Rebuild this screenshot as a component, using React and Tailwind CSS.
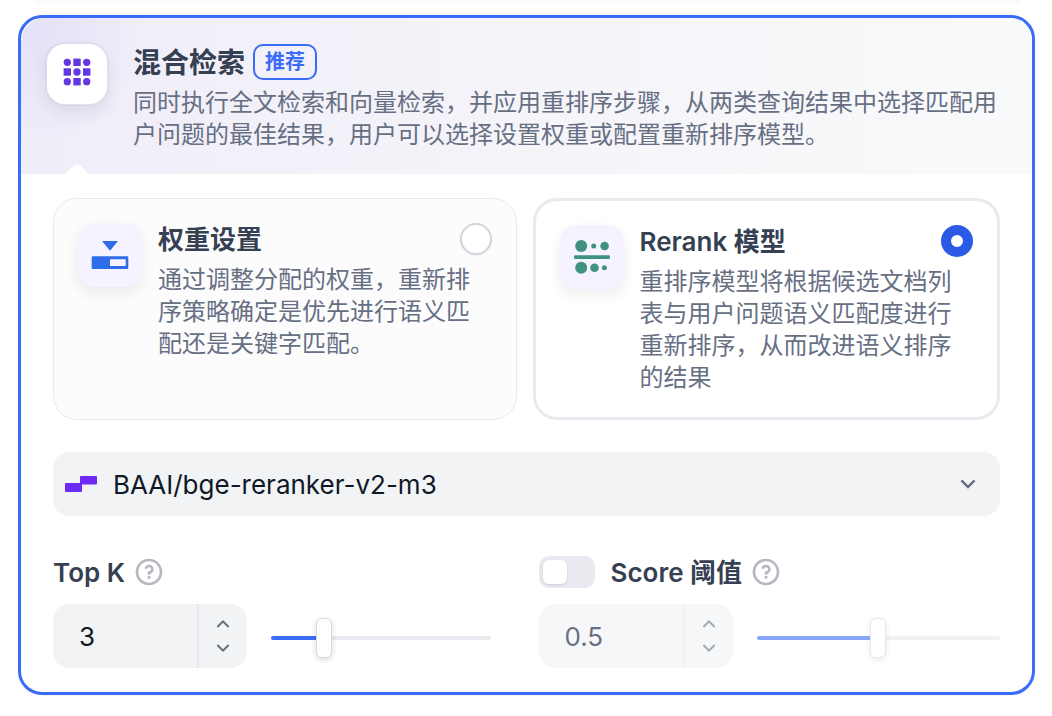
import { useState } from "react";
import { RiArrowDownSLine, RiArrowUpSLine, RiQuestionLine } from "react-icons/ri";

function HybridIcon() {
  const cells = [0, 1, 2].flatMap((row) => [0, 1, 2].map((col) => ({ row, col })));
  return (
    <svg viewBox="0 0 28 28" className="size-7" fill="#6338E0" aria-hidden="true">
      {cells.map(({ row, col }) =>
        (row + col) % 2 === 0 ? (
          <circle key={`${row}-${col}`} cx={4.3 + col * 9.7} cy={4.3 + row * 9.7} r="3.65" />
        ) : (
          <rect key={`${row}-${col}`} x={0.6 + col * 9.7} y={0.6 + row * 9.7} width="7.4" height="7.4" />
        )
      )}
    </svg>
  );
}

function WeightIcon() {
  return (
    <svg viewBox="0 0 40 40" className="size-10" aria-hidden="true">
      <path d="M12 6h16l-8 9.8z" fill="#2F6CE8" />
      <path
        d="M2.7 21.3h34.6a1 1 0 0 1 1 1V33a1 1 0 0 1-1 1H2.7a1 1 0 0 1-1-1V22.3a1 1 0 0 1 1-1zM20 24.3V31h15.7v-6.7z"
        fill="#2F6CE8"
        fillRule="evenodd"
      />
    </svg>
  );
}

function RerankIcon() {
  return (
    <svg viewBox="0 0 40 40" className="size-10" fill="#3F9280" aria-hidden="true">
      <circle cx="9.2" cy="9" r="6" />
      <circle cx="21.7" cy="9" r="2.5" />
      <circle cx="32.6" cy="9" r="4.3" />
      <rect x="2" y="18.2" width="36" height="3.8" rx="1.2" />
      <circle cx="9.2" cy="30.8" r="6" />
      <circle cx="22.5" cy="30.8" r="4.3" />
      <circle cx="32.4" cy="30.8" r="2.5" />
    </svg>
  );
}

function ProviderLogo() {
  return (
    <svg viewBox="0 0 32 32" className="size-8 shrink-0" fill="#6E29F6" aria-hidden="true">
      <path d="M16 8h15a1 1 0 0 1 1 1v6.5a1 1 0 0 1-1 1H17v6.5a1 1 0 0 1-1 1H1a1 1 0 0 1-1-1V16a1 1 0 0 1 1-1h14V9a1 1 0 0 1 1-1z" />
    </svg>
  );
}

function OptionCard({ id, title, text, icon, checked, onSelect }) {
  return (
    <label
      htmlFor={id}
      className={
        checked
          ? "flex flex-1 cursor-pointer gap-4 rounded-3xl border-3 border-[#e9e9ef] bg-white p-6"
          : "flex flex-1 cursor-pointer gap-4 rounded-3xl border border-[#e9e9ef] bg-[#fcfcfd] p-6"
      }
    >
      <span className="flex size-16 shrink-0 items-center justify-center rounded-2xl bg-[#f5f3ff] shadow-[0_6px_14px_rgba(16,24,40,0.08)]">
        {icon}
      </span>
      <span className="block min-w-0 flex-1">
        <span className="flex h-8 items-center justify-between">
          <span className="pt-0.5 text-[26px] leading-8 font-semibold text-[#354052]">{title}</span>
          <input
            id={id}
            type="radio"
            name="rerank-mode"
            checked={checked}
            onChange={onSelect}
            className="size-8 shrink-0 appearance-none rounded-full border-2 border-[#d0d5dc] bg-white shadow-xs checked:border-10 checked:border-[#2b5be6]"
          />
        </span>
        <span className="mt-[9px] -mb-px block text-2xl leading-8 text-[#676f83]">{text}</span>
      </span>
    </label>
  );
}

function NumberSlider({ id, label, value, min, max, step, disabled, onChange }) {
  const clamp = (v) => Math.min(max, Math.max(min, Math.round(v * 100) / 100));
  const percent = ((value - min) / (max - min)) * 100;
  return (
    <div className={disabled ? "mt-4 flex items-center gap-6 opacity-60" : "mt-4 flex items-center gap-6"}>
      <div className="flex h-16 w-[194px] shrink-0 overflow-hidden rounded-2xl bg-[#f1f3f5]">
        <input
          id={id}
          type="text"
          inputMode="decimal"
          value={value}
          disabled={disabled}
          onChange={(e) => onChange(clamp(Number(e.target.value) || min))}
          className="min-w-0 flex-1 bg-transparent pl-[26px] text-[26px] text-[#101828] outline-none disabled:text-[#020f30]"
        />
        <div className="flex w-[50px] flex-col items-center justify-center border-l-2 border-[#e6e8ec] text-[#676f83]">
          <button type="button" aria-label={`${label} +`} disabled={disabled} onClick={() => onChange(clamp(value + step))}>
            <RiArrowUpSLine className="size-6" />
          </button>
          <button type="button" aria-label={`${label} -`} disabled={disabled} onClick={() => onChange(clamp(value - step))}>
            <RiArrowDownSLine className="size-6" />
          </button>
        </div>
      </div>
      <input
        type="range"
        aria-label={label}
        min={min}
        max={max}
        step={step}
        value={value}
        disabled={disabled}
        onChange={(e) => onChange(Number(e.target.value))}
        style={{ "--fill": `${percent}%` }}
        className="mt-1 h-10 min-w-0 flex-1 appearance-none bg-transparent [&::-webkit-slider-runnable-track]:h-1 [&::-webkit-slider-runnable-track]:rounded-full [&::-webkit-slider-runnable-track]:bg-[linear-gradient(to_right,#3b6cf8_var(--fill),#e9e9ef_var(--fill))] [&::-webkit-slider-thumb]:-mt-[18px] [&::-webkit-slider-thumb]:h-10 [&::-webkit-slider-thumb]:w-4 [&::-webkit-slider-thumb]:appearance-none [&::-webkit-slider-thumb]:rounded-md [&::-webkit-slider-thumb]:border [&::-webkit-slider-thumb]:border-[#d9d9dc] [&::-webkit-slider-thumb]:bg-white [&::-webkit-slider-thumb]:shadow-[0_2px_6px_rgba(9,9,11,0.14)]"
      />
    </div>
  );
}

export default function App() {
  const [mode, setMode] = useState("rerank");
  const [topK, setTopK] = useState(3);
  const [score, setScore] = useState(0.5);
  const [scoreOn, setScoreOn] = useState(false);

  return (
    <main className="bg-white pr-[17px] pb-5 pl-[18px] font-['Inter','Noto_Sans_CJK_SC',sans-serif]">
      <div className="mx-4 h-0.5 rounded-b-full bg-[#fafafa] shadow-[0_1px_2px_rgba(16,24,40,0.03)]" />
      <section className="mt-[13px] rounded-3xl border-3 border-[#3b6cf8] bg-white shadow-xs">
        <header className="relative flex gap-6 rounded-t-3xl bg-[radial-gradient(circle_at_16px_16px,#e6e1f8,transparent_110px),linear-gradient(to_right,#f0edf9,#f5f4f9_50%,#f9fafb)] p-6">
          <div className="flex size-16 shrink-0 justify-center rounded-[20px] border-2 border-black/4 bg-white bg-clip-padding pt-3.5 shadow-[0_8px_16px_rgba(16,24,40,0.07)]">
            <HybridIcon />
          </div>
          <div className="min-w-0">
            <div className="flex h-10 items-center gap-2">
              <h2 className="pt-0.5 text-[28px] leading-10 font-semibold text-[#354052]">混合检索</h2>
              <span className="flex h-9 items-center rounded-[10px] border-2 border-[#3b6cf8] px-2.5 text-xl font-semibold text-[#3b6cf8]">
                推荐
              </span>
            </div>
            <p className="mt-[5px] -mb-px text-2xl leading-8 text-[#676f83]">
              同时执行全文检索和向量检索，并应用重排序步骤，从两类查询结果中选择匹配用户问题的最佳结果，用户可以选择设置权重或配置重新排序模型。
            </p>
          </div>
          <svg viewBox="0 0 26 10" className="absolute bottom-0 left-[43px] h-2.5 w-[26px]" fill="#fff" aria-hidden="true">
            <path d="M0 10C3 9.5 6 5.5 9.5 1.8 11.5-.3 14.5-.3 16.5 1.8 20 5.5 23 9.5 26 10z" />
          </svg>
        </header>

        <div className="px-8 py-6">
          <div className="flex gap-4">
            <OptionCard
              id="mode-weight"
              title="权重设置"
              text="通过调整分配的权重，重新排序策略确定是优先进行语义匹配还是关键字匹配。"
              icon={<WeightIcon />}
              checked={mode === "weight"}
              onSelect={() => setMode("weight")}
            />
            <OptionCard
              id="mode-rerank"
              title="Rerank 模型"
              text="重排序模型将根据候选文档列表与用户问题语义匹配度进行重新排序，从而改进语义排序的结果"
              icon={<RerankIcon />}
              checked={mode === "rerank"}
              onSelect={() => setMode("rerank")}
            />
          </div>

          <div className="mt-8 flex h-16 items-center rounded-2xl bg-[#f1f3f5] pr-[18px] pl-3">
            <ProviderLogo />
            <select
              aria-label="Rerank 模型"
              className="ml-4 h-full min-w-0 flex-1 appearance-none bg-transparent text-[26px] text-[#101828] outline-none"
            >
              <option>BAAI/bge-reranker-v2-m3</option>
            </select>
            <RiArrowDownSLine className="pointer-events-none size-7 shrink-0 text-[#676f83]" />
          </div>

          <div className="mt-10 grid grid-cols-2 gap-6">
            <div className="pr-6">
              <div className="flex h-8 items-center gap-2">
                <label htmlFor="top-k" className="pt-0.5 text-[26px] leading-8 font-semibold text-[#354052]">
                  Top K
                </label>
                <RiQuestionLine className="size-8 text-[#b6b8c1]" />
              </div>
              <NumberSlider id="top-k" label="Top K" value={topK} min={1} max={10} step={1} onChange={setTopK} />
            </div>
            <div>
              <div className="flex h-8 items-center gap-2">
                <input
                  type="checkbox"
                  role="switch"
                  aria-label="Score 阈值"
                  checked={scoreOn}
                  onChange={(e) => setScoreOn(e.target.checked)}
                  className="mr-2 flex h-8 w-14 shrink-0 appearance-none items-center rounded-[10px] bg-[#e9e9ef] p-1 before:size-6 before:rounded-md before:bg-white before:shadow-sm checked:justify-end checked:bg-[#2b5be6]"
                />
                <label htmlFor="score" className="pt-0.5 text-[26px] leading-8 font-semibold text-[#354052]">
                  Score 阈值
                </label>
                <RiQuestionLine className="size-8 text-[#b6b8c1]" />
              </div>
              <NumberSlider
                id="score"
                label="Score 阈值"
                value={score}
                min={0}
                max={1}
                step={0.01}
                disabled={!scoreOn}
                onChange={setScore}
              />
            </div>
          </div>
        </div>
      </section>
    </main>
  );
}
